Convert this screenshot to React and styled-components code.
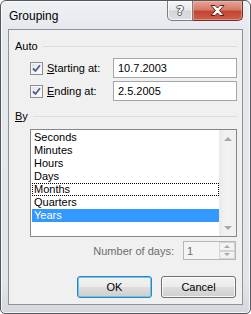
import styled, { createGlobalStyle } from "styled-components";

const GlobalStyle = createGlobalStyle`
  html, body { margin: 0; padding: 0; background: #ffffff; }
  body { font-family: "Liberation Sans", Arial, sans-serif; }
  * { box-sizing: border-box; }
`;

const periods = ["Seconds", "Minutes", "Hours", "Days", "Months", "Quarters", "Years"];

const Window = styled.div`
  width: 251px;
  height: 314px;
  border: 1px solid #54585e;
  border-radius: 6px 6px 5px 5px;
  background: linear-gradient(to bottom, #eef1f4 0, #e5e9ed 28px, #e2e6ea 90%, #d4d8dc 100%);
  box-shadow: inset 0 0 0 1px rgba(255, 255, 255, 0.75);
  display: flex;
  flex-direction: column;
  padding: 0 7px 8px;
`;

const TitleBar = styled.div`
  height: 28px;
  display: flex;
  align-items: flex-start;
  justify-content: space-between;
`;

const Title = styled.div`
  margin: 7px 0 0 1px;
  font-size: 12px;
  line-height: 16px;
  color: #000;
`;

const CaptionButtons = styled.div`
  display: flex;
  margin-top: 0;
`;

const CaptionButton = styled.div`
  height: 20px;
  width: ${(p) => (p.$close ? "50px" : "26px")};
  display: flex;
  align-items: center;
  justify-content: center;
  border: 1px solid ${(p) => (p.$close ? "#6a3129" : "#7a7d82")};
  border-top: none;
  border-left: ${(p) => (p.$close ? "none" : undefined)};
  border-radius: ${(p) => (p.$close ? "0 0 5px 0" : "0 0 0 5px")};
  background: ${(p) =>
    p.$close
      ? "linear-gradient(to bottom, #e6a596 0, #d77a69 45%, #c44533 55%, #cf5f4c 100%)"
      : "linear-gradient(to bottom, #f5f6f7 0, #e6e8eb 45%, #d3d6da 55%, #dcdfe2 100%)"};
  box-shadow: inset 0 0 0 1px ${(p) => (p.$close ? "rgba(255,200,190,0.45)" : "rgba(255,255,255,0.7)")};
`;

const HelpGlyph = styled.span`
  font-family: "DejaVu Sans", sans-serif;
  font-size: 13px;
  font-weight: bold;
  line-height: 1;
  color: #ffffff;
  text-shadow: -1px 0 #55595e, 1px 0 #55595e, 0 -1px #55595e, 0 1px #55595e;
`;

const Client = styled.div`
  flex: 1;
  border: 1px solid #8f9397;
  background: #f0f0f0;
  padding: 0 5px 0 6px;
  display: flex;
  flex-direction: column;
  font-size: 11px;
  color: #000;
`;

const GroupHeader = styled.div`
  display: flex;
  align-items: center;
  gap: 5px;
  height: 16px;
  line-height: 16px;
  margin-top: ${(p) => p.$top}px;
  &::after {
    content: "";
    flex: 1;
    height: 1px;
    background: #d5dfe5;
  }
`;

const FieldRow = styled.div`
  display: grid;
  grid-template-columns: 83px 1fr;
  align-items: center;
  height: 20px;
  margin: ${(p) => p.$top}px 0 0 15px;
`;

const CheckLabel = styled.label`
  display: flex;
  align-items: center;
  gap: 4px;
`;

const Box = styled.span`
  width: 13px;
  height: 13px;
  border: 1px solid #8e8f8f;
  background: linear-gradient(135deg, #dedede 0, #f6f6f6 60%, #ffffff 100%);
  box-shadow: inset 0 0 0 1px #f4f4f4;
  display: flex;
  align-items: center;
  justify-content: center;
`;

const TextBox = styled.div`
  height: 20px;
  border: 1px solid #a3a6ab;
  background: #ffffff;
  padding-left: 4px;
  display: flex;
  align-items: center;
`;

const ListBox = styled.div`
  height: 108px;
  margin: 5px 0 0 15px;
  border: 1px solid #828790;
  background: #ffffff;
  display: flex;
  padding: 1px 0 0 1px;
`;

const Items = styled.div`
  flex: 1;
  display: flex;
  flex-direction: column;
`;

const Item = styled.div`
  height: 13px;
  line-height: 13px;
  padding-left: 2px;
  background: ${(p) => (p.$selected ? "#3399ff" : "transparent")};
  color: ${(p) => (p.$selected ? "#ffffff" : "#000")};
  outline: ${(p) => (p.$focused ? "1px dotted #000" : "none")};
  outline-offset: -1px;
`;

const ScrollBar = styled.div`
  width: 17px;
  margin-top: -1px;
  background: linear-gradient(to right, #e9e9e9 0, #f3f3f3 40%, #f0f0f0 100%);
  display: flex;
  flex-direction: column;
  justify-content: space-between;
  align-items: center;
  padding: 7px 0 6px;
`;

const Arrow = styled.span`
  width: 0;
  height: 0;
  border-left: 4px solid transparent;
  border-right: 4px solid transparent;
  ${(p) => (p.$down ? "border-top: 4px solid #a7a7a7;" : "border-bottom: 4px solid #a7a7a7;")}
`;

const DaysRow = styled.div`
  display: flex;
  justify-content: flex-end;
  align-items: center;
  gap: 9px;
  height: 19px;
  margin: 4px 1px 0 0;
  color: #6d6d6d;
`;

const Spinner = styled.div`
  width: 53px;
  height: 19px;
  border: 1px solid #b5b7ba;
  background: #f4f4f4;
  display: flex;
  align-items: center;
  justify-content: space-between;
  padding-left: 3px;
`;

const SpinButtons = styled.div`
  width: 16px;
  height: 17px;
  display: flex;
  flex-direction: column;
`;

const SpinHalf = styled.div`
  flex: 1;
  border: 1px solid #d2d4d6;
  background: #f2f2f2;
  display: flex;
  align-items: center;
  justify-content: center;
`;

const SmallArrow = styled.span`
  width: 0;
  height: 0;
  border-left: 3px solid transparent;
  border-right: 3px solid transparent;
  ${(p) => (p.$down ? "border-top: 3px solid #a9a9a9;" : "border-bottom: 3px solid #a9a9a9;")}
`;

const ButtonRow = styled.div`
  display: flex;
  justify-content: flex-end;
  gap: 9px;
  margin: 16px 1px 0 0;
`;

const Button = styled.div`
  width: 75px;
  height: 22px;
  border: 1px solid ${(p) => (p.$default ? "#3c7fb1" : "#707070")};
  border-radius: 3px;
  background: linear-gradient(to bottom, #f2f2f2 0, #ebebeb 50%, #dddddd 51%, #cfcfcf 100%);
  box-shadow: inset 0 0 0 1px ${(p) => (p.$default ? "#5ecbf5" : "rgba(255,255,255,0.8)")};
  display: flex;
  align-items: center;
  justify-content: center;
  font-size: 11px;
  color: #000;
`;

function Check() {
  return (
    <Box>
      <svg width="9" height="9" viewBox="0 0 9 9">
        <path d="M1 4.5 L3.5 7 L8 1.2" fill="none" stroke="#4a5f97" strokeWidth="1.8" />
      </svg>
    </Box>
  );
}

export default function App() {
  return (
    <>
      <GlobalStyle />
      <Window>
        <TitleBar>
          <Title>Grouping</Title>
          <CaptionButtons>
            <CaptionButton>
              <HelpGlyph>?</HelpGlyph>
            </CaptionButton>
            <CaptionButton $close>
              <svg width="15" height="11" viewBox="0 0 15 11">
                <path
                  d="M1 0.5 H5 L7.5 3 L10 0.5 H14 L9.5 5.5 L14 10.5 H10 L7.5 8 L5 10.5 H1 L5.5 5.5 Z"
                  fill="#ffffff"
                  stroke="#5a1f17"
                  strokeWidth="1"
                />
              </svg>
            </CaptionButton>
          </CaptionButtons>
        </TitleBar>

        <Client>
          <GroupHeader $top={8}>Auto</GroupHeader>
          <FieldRow $top={4}>
            <CheckLabel>
              <Check />
              <span><u>S</u>tarting at:</span>
            </CheckLabel>
            <TextBox>10.7.2003</TextBox>
          </FieldRow>
          <FieldRow $top={3}>
            <CheckLabel>
              <Check />
              <span><u>E</u>nding at:</span>
            </CheckLabel>
            <TextBox>2.5.2005</TextBox>
          </FieldRow>

          <GroupHeader $top={7}>
            <span><u>B</u>y</span>
          </GroupHeader>
          <ListBox>
            <Items>
              {periods.map((p) => (
                <Item key={p} $selected={p === "Years"} $focused={p === "Months"}>
                  {p}
                </Item>
              ))}
            </Items>
            <ScrollBar>
              <Arrow />
              <Arrow $down />
            </ScrollBar>
          </ListBox>

          <DaysRow>
            <span>Number of days:</span>
            <Spinner>
              <span>1</span>
              <SpinButtons>
                <SpinHalf><SmallArrow /></SpinHalf>
                <SpinHalf><SmallArrow $down /></SpinHalf>
              </SpinButtons>
            </Spinner>
          </DaysRow>

          <ButtonRow>
            <Button $default>OK</Button>
            <Button>Cancel</Button>
          </ButtonRow>
        </Client>
      </Window>
    </>
  );
}
